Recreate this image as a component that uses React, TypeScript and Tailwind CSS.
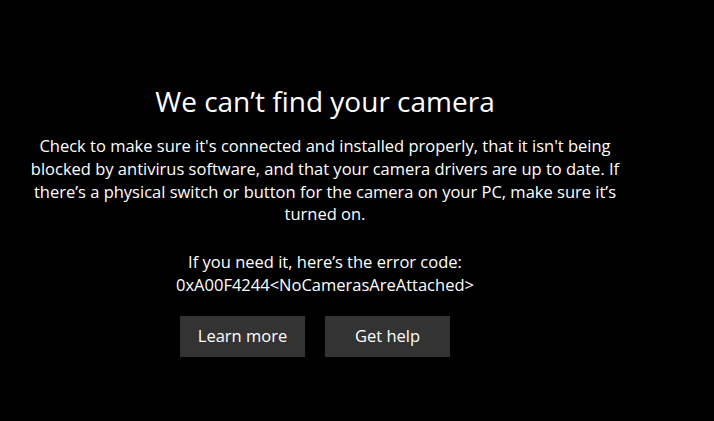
import React from "react";

export default function App() {
  return (
    <div
      className="w-[714px] h-[421px] bg-black text-white overflow-hidden"
      style={{ fontFamily: '"Open Sans", "Noto Sans", sans-serif' }}
    >
      <div className="w-[650px] flex flex-col items-center pt-[83px]">
        <h1 className="text-[28px] leading-[36px] font-normal whitespace-nowrap">We can’t find your camera</h1>
        <p className="mt-[16px] text-center text-[16.5px] leading-[22.8px] whitespace-nowrap">
          Check to make sure it's connected and installed properly, that it isn't being
          <br />
          blocked by antivirus software, and that your camera drivers are up to date. If
          <br />
          there’s a physical switch or button for the camera on your PC, make sure it’s
          <br />
          turned on.
        </p>
        <p className="mt-[25px] text-center text-[16.5px] leading-[22.8px] whitespace-nowrap">
          If you need it, here’s the error code:
          <br />
          0xA00F4244&lt;NoCamerasAreAttached&gt;
        </p>
        <div className="mt-[19px] w-full flex gap-[20px] pl-[180px]">
          <button className="w-[125px] h-[41px] bg-[#333333] text-[16.5px] text-white">Learn more</button>
          <button className="w-[125px] h-[41px] bg-[#333333] text-[16.5px] text-white">Get help</button>
        </div>
      </div>
    </div>
  );
}
